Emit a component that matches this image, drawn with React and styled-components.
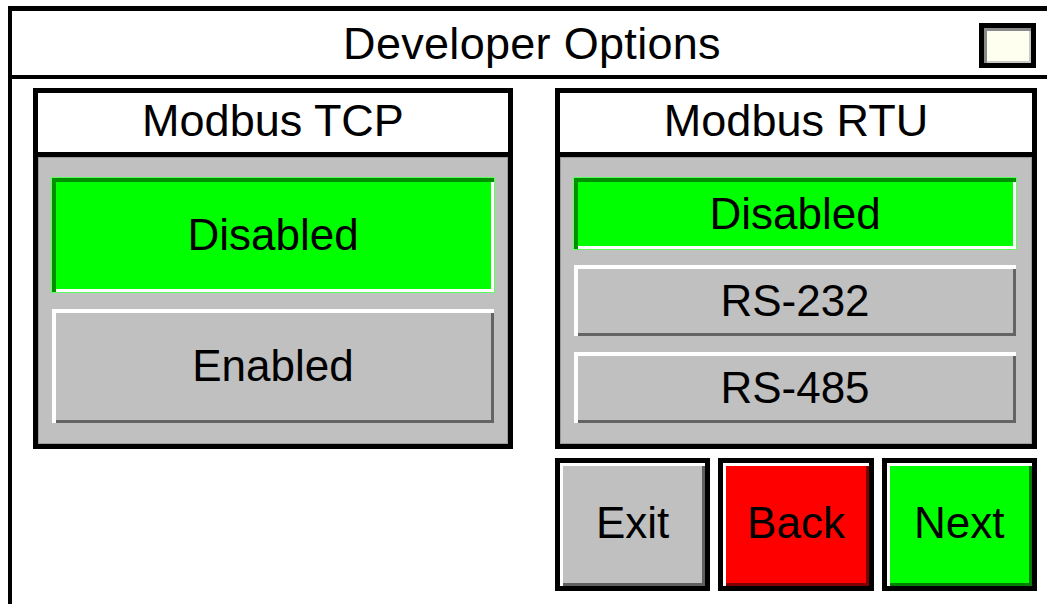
import React from "react";
import styled, { createGlobalStyle } from "styled-components";

const Global = createGlobalStyle`
  html, body { margin: 0; padding: 0; background: #fff; overflow: hidden; }
  body { font-family: "Liberation Sans", Arial, sans-serif; color: #000; }
  * { box-sizing: border-box; }
`;

const Frame = styled.div`
  margin: 6px 0 0 8px;
  height: calc(100vh - 6px);
  border-top: 5px solid #000;
  border-left: 4px solid #000;
  display: flex;
  flex-direction: column;
`;

const Header = styled.header`
  height: 68px;
  flex: none;
  border-bottom: 4px solid #000;
  display: grid;
  grid-template-columns: 1fr auto 1fr;
  align-items: center;
`;

const Title = styled.h1`
  grid-column: 2;
  margin: 0 0 0 5px;
  font-weight: normal;
  font-size: 45px;
  line-height: 1;
  letter-spacing: 0.3px;
`;

const CheckBox = styled.div`
  grid-column: 3;
  justify-self: end;
  align-self: start;
  margin: 12px 11px 0 0;
  width: 57px;
  height: 45px;
  border: 5px solid #000;
  background: #fffff0;
  box-shadow: inset 3px 3px 0 #8a8a8a, inset -2px -2px 0 #c8c8c8;
`;

const Body = styled.main`
  display: flex;
  align-items: flex-start;
  gap: 42px;
  padding: 9px 0 0 21px;
`;

const Column = styled.div`
  display: flex;
  flex-direction: column;
  gap: 9px;
  width: ${(p) => p.$w}px;
`;

const Panel = styled.section`
  border: 5px solid #000;
  display: flex;
  flex-direction: column;
`;

const PanelHeader = styled.div`
  height: 64px;
  background: #fff;
  border-bottom: 5px solid #000;
  display: flex;
  align-items: center;
  justify-content: center;
  font-size: 45px;
  line-height: 1;
  padding-bottom: 5px;
`;

const PanelBody = styled.div`
  height: 287px;
  background: #c0c0c0;
  padding: 21px ${(p) => p.$right}px 21px 14px;
  display: flex;
  flex-direction: column;
  gap: ${(p) => p.$gap}px;
  box-shadow: inset 1px 1px 0 #9a9a9a, inset -1px -1px 0 #9a9a9a;
`;

const OptionButton = styled.button`
  flex: 1;
  display: flex;
  align-items: center;
  justify-content: center;
  font-family: "Liberation Sans", Arial, sans-serif;
  font-size: 44px;
  color: #000;
  padding: 0;
  border: none;
  cursor: pointer;
  background: ${(p) => (p.$active ? "#00ff00" : "#c0c0c0")};
  box-shadow: ${(p) =>
    p.$active
      ? "0 0 0 1px #5cff5c, inset 4px 4px 0 #009000, inset -3px -3px 0 #ffffff"
      : "inset 4px 4px 0 #ffffff, inset -3px -3px 0 #646464"};
`;

const ButtonRow = styled.div`
  display: grid;
  grid-template-columns: repeat(3, 1fr);
  gap: 8px;
`;

const NavButton = styled.button`
  height: 133px;
  border: 5px solid #000;
  padding: 0 0 3px;
  font-family: "Liberation Sans", Arial, sans-serif;
  font-size: 44px;
  color: #000;
  cursor: pointer;
  background: ${(p) => p.$bg};
  box-shadow: inset 3px 3px 0 #ffffff, inset -3px -3px 0 rgba(0, 0, 0, 0.5);
`;

export default function App() {
  return (
    <>
      <Global />
      <Frame>
        <Header>
          <Title>Developer Options</Title>
          <CheckBox />
        </Header>
        <Body>
          <Column $w={480}>
            <Panel>
              <PanelHeader>Modbus TCP</PanelHeader>
              <PanelBody $gap={17} $right={14}>
                <OptionButton $active>Disabled</OptionButton>
                <OptionButton>Enabled</OptionButton>
              </PanelBody>
            </Panel>
          </Column>
          <Column $w={482}>
            <Panel>
              <PanelHeader>Modbus RTU</PanelHeader>
              <PanelBody $gap={16} $right={16}>
                <OptionButton $active>Disabled</OptionButton>
                <OptionButton>RS-232</OptionButton>
                <OptionButton>RS-485</OptionButton>
              </PanelBody>
            </Panel>
            <ButtonRow>
              <NavButton $bg="#c0c0c0">Exit</NavButton>
              <NavButton $bg="#ff0000">Back</NavButton>
              <NavButton $bg="#00ff00">Next</NavButton>
            </ButtonRow>
          </Column>
        </Body>
      </Frame>
    </>
  );
}
